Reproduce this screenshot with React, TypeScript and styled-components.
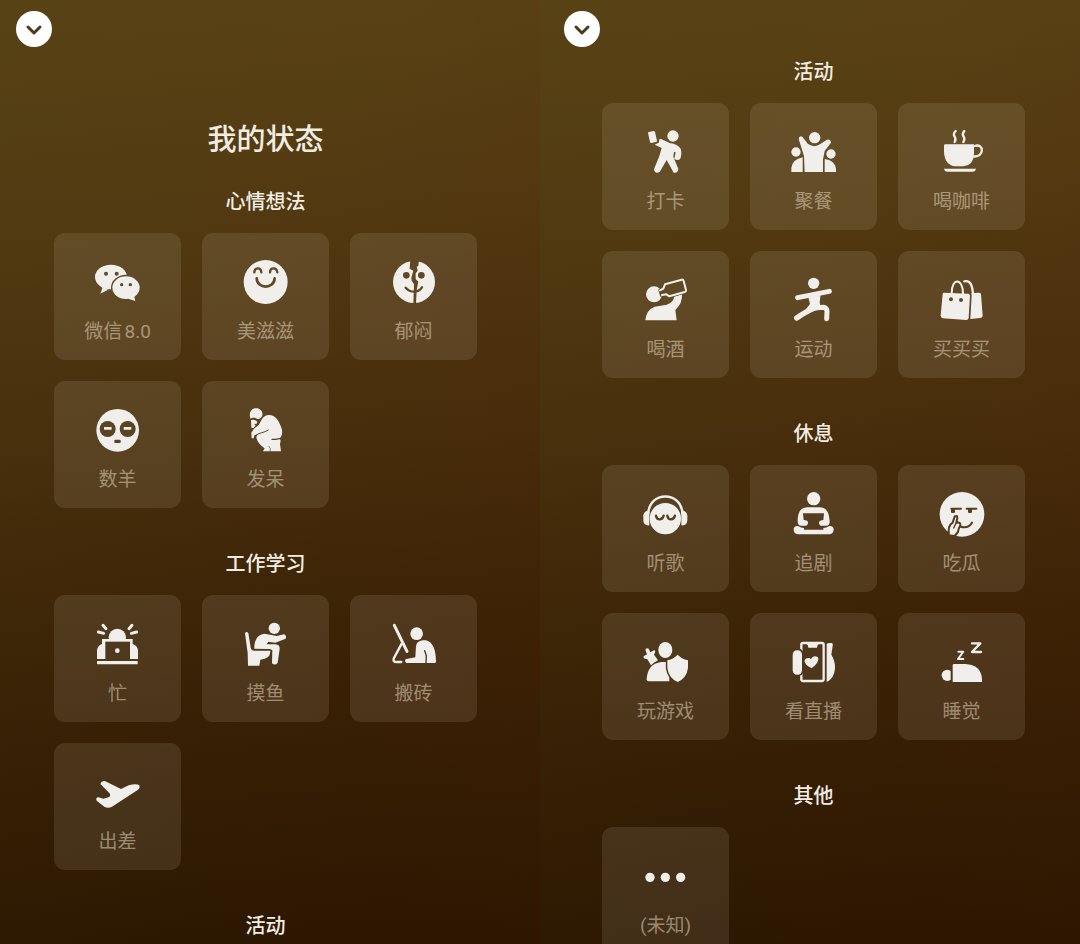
import React, { useId } from 'react';
import type { ReactNode } from 'react';
import styled, { createGlobalStyle } from 'styled-components';

const GlobalStyle = createGlobalStyle`
  *, *::before, *::after { box-sizing: border-box; }
  body {
    margin: 0;
    background: #2a1801;
    font-family: Roboto, "Noto Sans CJK SC", sans-serif;
  }
  h1, h2 { margin: 0; font-weight: 500; }
`;

const Page = styled.main`
  display: grid;
  grid-template-columns: repeat(2, minmax(0, 1fr));
  height: 100vh;
`;

const Panel = styled.section<{ $inset: number }>`
  min-width: 0;
  padding: 11px 0 0 ${(p) => p.$inset}px;
  overflow: hidden auto;
  scrollbar-width: none;
  background:
    linear-gradient(100deg, rgba(60, 60, 20, 0.08), rgba(50, 40, 10, 0) 50%, rgba(100, 25, 0, 0.07)),
    linear-gradient(174deg, #5a4315 0%, #543b12 20%, #4a300d 42%, #3c2306 66%, #321c03 84%, #2a1601 100%);
`;

const CollapseButton = styled.button`
  display: flex;
  align-items: center;
  justify-content: center;
  width: 36px;
  height: 36px;
  padding: 0;
  border: 0;
  border-radius: 50%;
  background: #fff;
  color: #4b3a1b;
  cursor: pointer;
`;

const Content = styled.div<{ $top: number; $left: number; $right: number }>`
  padding: ${(p) => p.$top}px ${(p) => p.$right}px 24px ${(p) => p.$left}px;
`;

const Title = styled.h1`
  && { margin-bottom: 28px; }
  color: #f1ede4;
  font-size: 29px;
  line-height: 40px;
  text-align: center;
`;

const Group = styled.section`
  & + & { margin-top: 42px; }
`;

const GroupTitle = styled.h2`
  color: #f1ede4;
  font-size: 20px;
  line-height: 28px;
  text-align: center;
`;

const Grid = styled.div`
  display: grid;
  grid-template-columns: repeat(3, minmax(0, 1fr));
  gap: 21px;
  margin-top: 17px;
`;

const Card = styled.button`
  display: flex;
  flex-direction: column;
  align-items: center;
  gap: 14px;
  aspect-ratio: 1;
  padding: 25px 0 0;
  border: 0;
  border-radius: 11px;
  background: rgba(255, 244, 225, 0.1);
  color: rgba(240, 228, 208, 0.5);
  font-family: inherit;
  font-size: 19px;
  line-height: 24px;
  white-space: nowrap;
  text-autospace: normal;
  cursor: pointer;
`;

const Glyph = styled.svg`
  flex: none;
  display: block;
  width: 48px;
  height: 48px;
`;

/* Icons are drawn as a mask: white shows, black cuts through to the card. */
type Art = { x: number; y: number; art: ReactNode };

const line = (d: string, w: number, color = '#fff') => (
  <path d={d} fill="none" stroke={color} strokeWidth={w} strokeLinecap="round" strokeLinejoin="round" />
);
const cut = (d: string, w: number) => line(d, w, '#000');
const dot = (cx: number, cy: number, r: number, fill = '#fff') => <circle cx={cx} cy={cy} r={r} fill={fill} />;
const hole = (cx: number, cy: number, r: number) => dot(cx, cy, r, '#000');

const icons: Record<string, Art> = {
  wechat: {
    x: 132, y: 86,
    art: (
      <>
        <ellipse cx="183" cy="143" rx="48" ry="37" />
        <path d="M149 166 L157 177 L151 193 L174 181Z" />
        {hole(168, 133, 6)}{hole(200, 133, 6)}
        <ellipse cx="228" cy="175" rx="45" ry="39" fill="#000" />
        <ellipse cx="228" cy="175" rx="41" ry="34" />
        <path d="M234 208 L256 215 L253 202 L258 194Z" />
        {hole(215, 166, 5)}{hole(241, 166, 5)}
      </>
    ),
  },
  smile: {
    x: 576, y: 86,
    art: (
      <>
        {dot(647, 158, 66)}
        {cut('M613 129 C614 113 633 113 634 129', 7)}
        {cut('M660 129 C661 113 680 113 682 129', 7)}
        {cut('M620 147 C622 180 672 180 674 147', 8)}
      </>
    ),
  },
  cracked: {
    x: 1020, y: 86,
    art: (
      <>
        {dot(1092, 158, 63)}
        <path fill="#000" d="M1081 90 L1079 118 L1090 124 L1084 145 L1085 154 L1092 165 L1090 224 L1098 224 L1100 182 L1105 157 L1097 149 L1097 132 L1103 124 L1100 112 L1105 110 L1107 90Z" />
        {hole(1069, 138, 10)}{hole(1114, 138, 10)}
        {cut('M1067 175 Q1078 187 1092 187 Q1107 187 1116 174', 7)}
      </>
    ),
  },
  sheep: {
    x: 132, y: 80,
    art: (
      <>
        {dot(203, 153, 64)}
        {hole(173, 149, 24)}{hole(233, 149, 24)}
        <rect x="162" y="143" width="23" height="8" rx="1" />
        <rect x="221" y="143" width="23" height="8" rx="1" />
        <rect x="193" y="181" width="19" height="10" rx="3" fill="#000" />
      </>
    ),
  },
  thinker: {
    x: 576, y: 80,
    art: (
      <>
        <path d="M600 112 C597 96 607 86 619 87 C631 87 639 97 637 108 C636 115 630 119 624 120 C616 115 608 114 601 118Z" />
        <path d="M603 123 C610 120 617 122 622 127 L620 133 L612 134 L617 138 L611 146 L604 145Z" />
        <path d="M604 160 L612 148 L626 137 C634 126 636 108 657 107 C676 107 686 124 693 142 C698 154 698 166 692 173 L690 180 L692 184 L690 194 L693 216 L639 216 L644 207 C632 199 620 186 619 173 L622 165 L613 168 L611 177 L605 177Z" />
        {cut('M617 169 C624 160 643 161 655 152', 3)}
        {cut('M666 180 C676 181 684 178 693 177', 4)}
        {cut('M657 201 L661 208 L660 217', 2)}
      </>
    ),
  },
  busy: {
    x: 132, y: 91,
    art: (
      <>
        {dot(202, 143, 26)}
        <path d="M141 208 V182 Q142 168 156 163 V148 H248 V163 Q263 168 264 182 V208Z" />
        <rect x="166" y="156" width="74" height="53" fill="#000" />
        {dot(202, 183, 7)}
        <rect x="141" y="214" width="122" height="10" rx="1" />
        {line('M145 127 L161 131', 9)}{line('M159 107 L168 117', 9)}
        {line('M246 107 L237 117', 9)}{line('M260 127 L244 131', 9)}
      </>
    ),
  },
  toilet: {
    x: 576, y: 91,
    art: (
      <>
        {dot(673, 116, 17)}
        <path d="M585 131 Q589 123 595 130 L602 174 Q604 183 613 183 H661 Q662 207 631 210 L628 228 H594 L593 190Z" />
        <path d="M613 177 C612 154 622 133 644 132 L680 139 L702 134 Q711 138 707 147 L676 159 L655 156 L650 164 H676 Q690 165 689 178 L683 219 Q676 229 666 221 L667 182 L660 178Z" />
      </>
    ),
  },
  bricks: {
    x: 1020, y: 91,
    art: (
      <>
        {dot(1100, 132, 19)}
        <path d="M1069 220 Q1061 213 1069 208 L1096 203 L1098 170 C1100 154 1114 151 1128 152 C1150 157 1158 184 1158 216 L1156 220Z" />
        {cut('M1124 183 L1129 198 L1128 220', 4)}
        {line('M1033 107 L1071 185', 9)}
        {line('M1055 162 L1031 207 Q1029 217 1037 217 L1054 217', 7)}
      </>
    ),
  },
  plane: {
    x: 132, y: 86,
    art: (
      <path d="M151 134 Q155 123 166 126 L213 149 L236 138 Q260 132 268 138 Q271 147 263 152 L186 202 Q174 208 163 202 L140 184 Q136 175 145 174 L160 178 L178 173 Q182 168 180 163Z" />
    ),
  },
  checkin: {
    x: 132, y: 88,
    art: (
      <>
        {dot(225, 112, 17)}
        <path d="M152 100 L167 97 Q170 97 171 100 L177 126 Q177 129 174 130 L160 133 Q157 133 156 130 L150 103 Q150 101 152 100Z" />
        <path d="M170 138 L182 132 L184 122 L189 121 L215 133 Q240 137 248 150 Q253 165 246 182 Q236 187 229 180 L233 161 L228 160 L226 174 L241 211 Q240 224 227 222 L206 184 L185 220 Q170 227 168 212 L184 172 L191 148Z" />
      </>
    ),
  },
  party: {
    x: 576, y: 88,
    art: (
      <>
        {dot(650, 117, 17)}
        <path d="M602 121 Q603 110 613 114 L630 136 Q650 149 667 136 L687 123 Q698 121 699 132 L680 157 L675 182 V220 H620 L618 172Z" />
        {dot(594, 160, 14)}{dot(699, 166, 14)}
        <path d="M580 220 V208 Q583 182 614 176 V220Z" />
        <path d="M680 220 V181 Q710 184 714 210 V220Z" />
      </>
    ),
  },
  coffee: {
    x: 1020, y: 88,
    art: (
      <>
        <path d="M1042 137 H1128 V165 Q1127 200 1096 203 H1072 Q1040 200 1038 160 V141 Q1038 137 1042 137Z" />
        {line('M1130 142 C1159 132 1160 178 1126 173', 7)}
        <path d="M1038 210 H1134 Q1132 219 1124 219 H1048 Q1040 219 1038 210Z" />
        {line('M1073 97 Q1064 106 1070 114 Q1075 122 1070 130', 7)}
        {line('M1099 97 Q1091 106 1097 114 Q1102 122 1096 130', 7)}
      </>
    ),
  },
  drink: {
    x: 132, y: 88,
    art: (
      <>
        {dot(168, 143, 24)}
        <path d="M142 221 Q144 190 170 180 L206 174 Q228 166 228 150 L252 142 Q254 170 232 190 L236 221Z" />
        <path d="M186 131 L196 126 L201 113 L251 99 Q256 98 257 103 L264 130 Q265 134 260 136 L214 149 L205 143 L190 145Z" fill="#000" stroke="#000" strokeWidth="9" />
        {line('M186 131 L196 126 L201 113 L251 99 Q256 98 257 103 L264 130 Q265 134 260 136 L214 149 L205 143 L192 145', 6)}
      </>
    ),
  },
  sport: {
    x: 576, y: 88,
    art: (
      <>
        {dot(647, 110, 17)}
        {line('M599 153 L694 134', 15)}
        <path d="M630 148 L668 140 L665 168 L668 178 L640 196 L622 190 L636 172Z" />
        {line('M596 214 Q625 194 650 184', 16)}
        {line('M650 184 L676 182 Q687 184 687 194 L686 216', 15)}
      </>
    ),
  },
  bags: {
    x: 1020, y: 88,
    art: (
      <>
        <path d="M1038 138 L1111 141 Q1116 142 1116 147 L1112 214 Q1111 220 1104 220 L1034 215 Q1028 213 1028 206 L1034 142 Q1035 138 1038 138Z" />
        {line('M1061 140 C1061 92 1095 92 1095 142', 6)}
        {hole(1059, 158, 6)}{hole(1089, 160, 6)}
        <path d="M1121 146 L1121 139 L1144 138 Q1149 138 1149 143 L1154 207 Q1154 213 1147 214 L1117 217Z" />
        {line('M1099 104 C1116 100 1124 114 1125 146', 7)}
      </>
    ),
  },
  music: {
    x: 132, y: 86,
    art: (
      <>
        {dot(202, 172, 47)}
        {line('M151 158 C151 88 253 88 253 158', 7)}
        <path d="M154 146 V192 Q136 194 136 176 V162 Q137 150 154 146Z" />
        <path d="M250 146 V192 Q268 194 268 176 V162 Q267 150 250 146Z" />
        {cut('M174 163 Q176 174 185 174 Q194 174 197 163', 7)}
        {cut('M208 163 Q210 174 219 174 Q228 174 231 163', 7)}
      </>
    ),
  },
  series: {
    x: 576, y: 86,
    art: (
      <>
        {dot(647, 112, 20)}
        <path d="M599 182 C599 152 607 138 630 138 H664 C686 138 694 154 695 182 Q695 193 684 193 H668 Q662 189 663 182 Q666 176 676 176 L678 156 H615 L617 176 Q628 176 630 182 Q631 190 625 193 H610 Q600 193 599 182Z" />
        <path d="M587 203 Q590 192 602 195 Q608 200 618 200 V205 H676 V200 Q686 200 692 195 Q704 192 707 203 Q708 218 694 219 H600 Q586 218 587 203Z" />
      </>
    ),
  },
  melon: {
    x: 1020, y: 86,
    art: (
      <>
        {dot(1092, 159, 67)}
        {cut('M1060 142 H1089', 6)}{cut('M1106 142 H1135', 6)}
        <rect x="1059" y="142" width="12" height="13" rx="4" fill="#000" />
        <rect x="1110" y="142" width="12" height="13" rx="4" fill="#000" />
        {cut('M1088 196 Q1112 202 1122 184', 6)}
        <path d="M1053 222 C1050 204 1054 190 1064 184 L1070 166 Q1078 160 1078 170 L1075 184 Q1088 181 1087 192 Q1082 200 1080 212 L1070 224Z" fill="#fff" stroke="#000" strokeWidth="6" strokeLinejoin="round" />
        {cut('M1067 200 L1075 184', 4)}
      </>
    ),
  },
  game: {
    x: 132, y: 88,
    art: (
      <>
        <path d="M146 212 Q148 166 190 160 H214 V218 H152 Q146 218 146 212Z" />
        <ellipse cx="202" cy="124" rx="21" ry="24" />
        <path d="M142 123 Q146 117 152 120 L157 131 L169 124 L172 129 L168 138 L180 155 Q170 159 159 170 L148 152 L137 149 L137 143 L147 137Z" />
        <path d="M239 138 Q250 150 270 155 V178 Q266 208 239 220 Q212 208 208 178 V155 Q228 150 239 138Z" stroke="#000" strokeWidth="9" fill="#000" />
        <path d="M239 138 Q250 150 270 155 V178 Q266 208 239 220 Q212 208 208 178 V155 Q228 150 239 138Z" />
      </>
    ),
  },
  live: {
    x: 576, y: 88,
    art: (
      <>
        <rect x="610" y="103" width="67" height="114" rx="5" fill="none" stroke="#fff" strokeWidth="7" />
        <path d="M626 102 H662 V106 Q658 108 657 117 H631 Q630 108 626 106Z" />
        <path d="M641 179 C627 172 618 163 620 155 C623 146 635 146 639 151 C643 141 658 139 661 149 C662 160 653 170 641 179Z" />
        <rect x="579" y="119" width="38" height="84" rx="18" fill="#000" />
        <rect x="584" y="125" width="28" height="73" rx="13" />
        <path d="M686 106 Q688 102 700 103 Q706 104 704 112 L700 138 Q712 156 711 180 Q708 210 686 220Z" />
      </>
    ),
  },
  sleep: {
    x: 1020, y: 88,
    art: (
      <>
        {dot(1048, 200, 17)}
        <rect x="1058" y="180" width="8" height="42" fill="#000" />
        <path d="M1068 166 H1102 Q1150 168 1152 212 V220 H1064 V170 Q1064 166 1068 166Z" />
        {line('M1122 104 H1147 L1122 130 H1149', 7)}
        {line('M1081 129 H1096 L1080 151 H1096', 6)}
      </>
    ),
  },
  more: { x: 2, y: 0, art: <>{dot(26, 76, 14)}{dot(72, 76, 14)}{dot(118, 76, 14)}</> },
};

function StatusIcon({ name }: { name: string }) {
  const id = useId();
  const { x, y, art } = icons[name];
  return (
    <Glyph viewBox={`${x} ${y} 144 144`} aria-hidden="true">
      <mask id={id} maskUnits="userSpaceOnUse" x={x} y={y} width="144" height="144">
        <g fill="#fff">{art}</g>
      </mask>
      <rect x={x} y={y} width="144" height="144" fill="#f0efeb" mask={`url(#${id})`} />
    </Glyph>
  );
}

type GroupData = { title: string; items: [string, string][] };

const mood: GroupData = {
  title: '心情想法',
  items: [['wechat', '微信8.0'], ['smile', '美滋滋'], ['cracked', '郁闷'], ['sheep', '数羊'], ['thinker', '发呆']],
};
const work: GroupData = {
  title: '工作学习',
  items: [['busy', '忙'], ['toilet', '摸鱼'], ['bricks', '搬砖'], ['plane', '出差']],
};
const activity: GroupData = {
  title: '活动',
  items: [['checkin', '打卡'], ['party', '聚餐'], ['coffee', '喝咖啡'], ['drink', '喝酒'], ['sport', '运动'], ['bags', '买买买']],
};
const rest: GroupData = {
  title: '休息',
  items: [['music', '听歌'], ['series', '追剧'], ['melon', '吃瓜'], ['game', '玩游戏'], ['live', '看直播'], ['sleep', '睡觉']],
};
const other: GroupData = { title: '其他', items: [['more', '(未知)']] };

function StatusGroup({ title, items }: GroupData) {
  return (
    <Group>
      <GroupTitle>{title}</GroupTitle>
      {items.length > 0 && (
        <Grid>
          {items.map(([icon, label]) => (
            <Card key={icon} type="button">
              <StatusIcon name={icon} />
              <span>{label}</span>
            </Card>
          ))}
        </Grid>
      )}
    </Group>
  );
}

function Collapse() {
  return (
    <CollapseButton type="button" aria-label="收起">
      <svg width="18" height="18" viewBox="0 0 18 18" fill="none" stroke="currentColor" strokeWidth="3" strokeLinecap="round" strokeLinejoin="round" aria-hidden="true">
        <path d="M3 7 L9 13 L15 7" />
      </svg>
    </CollapseButton>
  );
}

export default function App() {
  return (
    <>
      <GlobalStyle />
      <Page>
        <Panel $inset={16}>
          <Collapse />
          <Content $top={73} $left={38} $right={63}>
            <Title>我的状态</Title>
            <StatusGroup {...mood} />
            <StatusGroup {...work} />
            <StatusGroup title={activity.title} items={[]} />
          </Content>
        </Panel>
        <Panel $inset={24}>
          <Collapse />
          <Content $top={11} $left={38} $right={55}>
            <StatusGroup {...activity} />
            <StatusGroup {...rest} />
            <StatusGroup {...other} />
          </Content>
        </Panel>
      </Page>
    </>
  );
}
